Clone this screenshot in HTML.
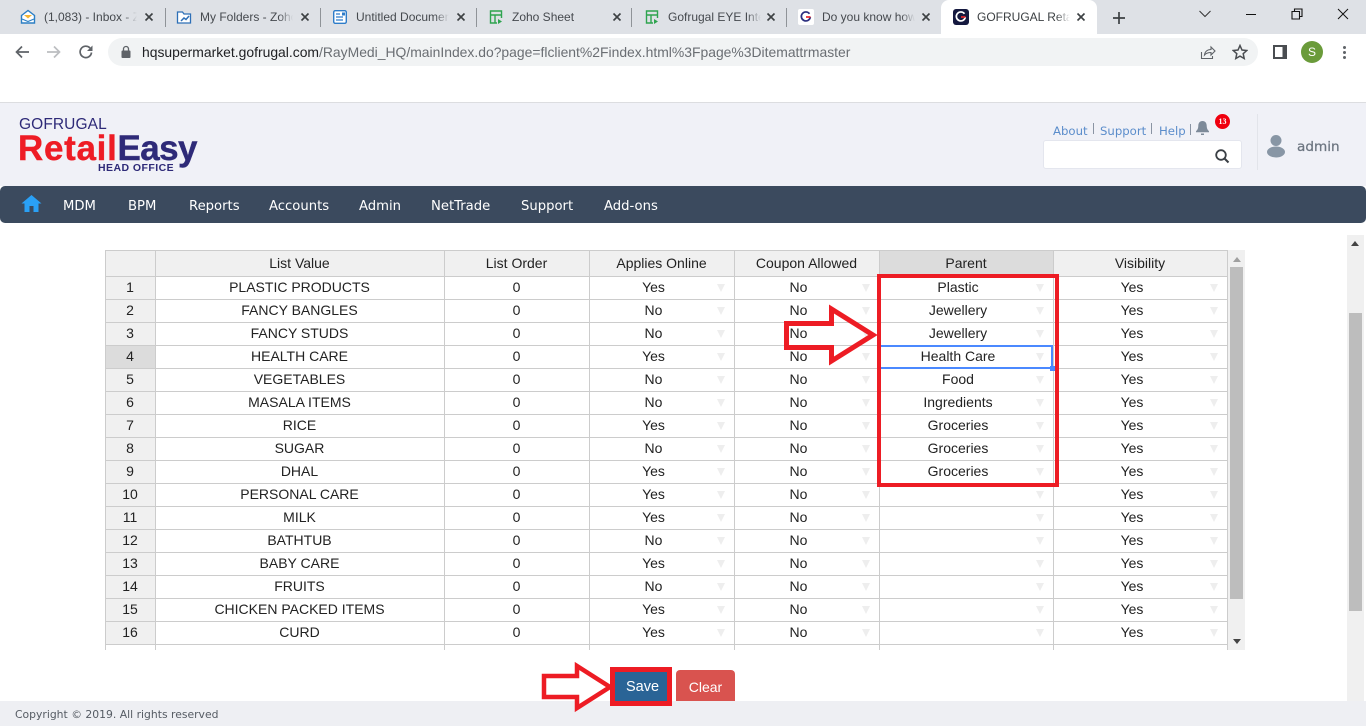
<!DOCTYPE html>
<html><head><meta charset="utf-8"><title>GOFRUGAL RetailEasy</title>
<style>
*{box-sizing:border-box}
html,body{margin:0;padding:0;width:1366px;height:726px;overflow:hidden;background:#fff;font-family:"Liberation Sans",sans-serif}
.a{position:absolute}
.tab{position:absolute;top:8px;font-size:12px;line-height:18px;color:#45494e;white-space:nowrap;overflow:hidden;height:18px}
.tab i{position:absolute;right:0;top:0;width:14px;height:18px;background:linear-gradient(90deg,rgba(222,225,230,0),#dee1e6)}
.x{position:absolute;top:11px;width:12px;height:12px}
.sep{position:absolute;top:8px;width:1px;height:19px;background:#8f9398}
.nav{position:absolute;top:198px;font:13.2px/17px "DejaVu Sans",sans-serif;color:#fff;white-space:nowrap}
.lnk{position:absolute;top:123px;font:11.7px/16px "DejaVu Sans",sans-serif;color:#5b8dcb;white-space:nowrap}
.vs{position:absolute;width:1px;background:#8a94a3}
table{border-collapse:separate;border-spacing:0;table-layout:fixed;width:1123px;font-size:14px;color:#222}
th{font-weight:normal;background:#f0f0f0;height:27px;border-top:1px solid #ccc;border-right:1px solid #ccc;border-bottom:1px solid #ccc;padding:0 1px 0 0;text-align:center;line-height:25px}
td{height:23px;border-right:1px solid #ccc;border-bottom:1px solid #ccc;padding:0 1px 2px 0;text-align:center;line-height:20px;position:relative;background:#fff;white-space:nowrap}
th:first-child,td:first-child{border-left:1px solid #ccc;background:#f0f0f0}
td.d{padding-right:17px}
td.d:after{content:"";position:absolute;right:9px;top:7px;border-left:4px solid transparent;border-right:4px solid transparent;border-top:8px solid #eee}
</style></head><body>

<!-- tab strip -->
<div class="a" style="left:0;top:0;width:1366px;height:34px;background:#dee1e6"></div>
<div class="a" style="left:941px;top:0;width:156px;height:34px;background:#fff;border-radius:8px 8px 0 0"></div>

<svg class="a" style="left:20px;top:9px" width="16" height="16" viewBox="0 0 16 16"><path d="M1.500 6.500L8 1.500l6.500 5V14h-13z" fill="#fff" stroke="#2c7fc4" stroke-width="1.400"/><path d="M4 6h8L8 9.500z" fill="#f5b532"/><path d="M2 10l6 2.500 6-2.500" fill="none" stroke="#2c7fc4" stroke-width="1.200"/></svg>
<div class="tab" style="left:44px;width:93px">(1,083) - Inbox - Zoho<i></i></div>
<svg class="x" style="left:143px" viewBox="0 0 12 12"><path d="M2.500 2.500l7 7M9.500 2.500l-7 7" stroke="#3c4043" stroke-width="1.600"/></svg>
<div class="sep" style="left:165px"></div>

<svg class="a" style="left:176px;top:9px" width="16" height="16" viewBox="0 0 16 16"><path d="M1.500 3h5l1.500 2h6.500v9h-13z" fill="#fff" stroke="#2d6fb7" stroke-width="1.300"/><path d="M5 12l3-3 2 1.500 3-3.500" fill="none" stroke="#2d6fb7" stroke-width="1.500"/></svg>
<div class="tab" style="left:200px;width:93px">My Folders - Zoho<i></i></div>
<svg class="x" style="left:299px" viewBox="0 0 12 12"><path d="M2.500 2.500l7 7M9.500 2.500l-7 7" stroke="#3c4043" stroke-width="1.600"/></svg>
<div class="sep" style="left:320px"></div>

<svg class="a" style="left:332px;top:9px" width="16" height="16" viewBox="0 0 16 16"><rect x="1.700" y="1.700" width="12.600" height="12.600" rx="1.500" fill="#fff" stroke="#2d7cc9" stroke-width="1.400"/><path d="M4 5h4M4 8h7M4 11h7" stroke="#2d7cc9" stroke-width="1.300"/><rect x="10" y="3.500" width="3" height="3" fill="#2d7cc9"/></svg>
<div class="tab" style="left:356px;width:93px">Untitled Document<i></i></div>
<svg class="x" style="left:455px" viewBox="0 0 12 12"><path d="M2.500 2.500l7 7M9.500 2.500l-7 7" stroke="#3c4043" stroke-width="1.600"/></svg>
<div class="sep" style="left:476px"></div>

<svg class="a" style="left:488px;top:9px" width="16" height="16" viewBox="0 0 16 16"><path d="M9 14H2.500V2h11v7M2.500 6h11M7 6v8" fill="none" stroke="#2ea44f" stroke-width="1.400"/><path d="M10 10l4 2.500-4 2.500z" fill="#2ea44f"/></svg>
<div class="tab" style="left:512px;width:93px">Zoho Sheet</div>
<svg class="x" style="left:611px" viewBox="0 0 12 12"><path d="M2.500 2.500l7 7M9.500 2.500l-7 7" stroke="#3c4043" stroke-width="1.600"/></svg>
<div class="sep" style="left:631px"></div>

<svg class="a" style="left:644px;top:9px" width="16" height="16" viewBox="0 0 16 16"><path d="M9 14H2.500V2h11v7M2.500 6h11M7 6v8" fill="none" stroke="#2ea44f" stroke-width="1.400"/><path d="M10 10l4 2.500-4 2.500z" fill="#2ea44f"/></svg>
<div class="tab" style="left:668px;width:93px">Gofrugal EYE Integration<i></i></div>
<svg class="x" style="left:765px" viewBox="0 0 12 12"><path d="M2.500 2.500l7 7M9.500 2.500l-7 7" stroke="#3c4043" stroke-width="1.600"/></svg>
<div class="sep" style="left:786px"></div>

<svg class="a" style="left:798px;top:9px" width="16" height="16" viewBox="0 0 16 16"><rect width="16" height="16" rx="2" fill="#fff"/><path d="M11.500 4.800A4.500 4.500 0 1 0 12.300 8" fill="none" stroke="#2b2f7f" stroke-width="1.700"/><path d="M8 8h4.500" stroke="#e8262c" stroke-width="1.700"/></svg>
<div class="tab" style="left:822px;width:93px">Do you know how to<i></i></div>
<svg class="x" style="left:920px" viewBox="0 0 12 12"><path d="M2.500 2.500l7 7M9.500 2.500l-7 7" stroke="#3c4043" stroke-width="1.600"/></svg>

<svg class="a" style="left:953px;top:9px" width="16" height="16" viewBox="0 0 16 16"><rect width="16" height="16" rx="3" fill="#15193f"/><path d="M11.500 4.800A4.500 4.500 0 1 0 12.300 8" fill="none" stroke="#fff" stroke-width="1.700"/><path d="M8 8h4.500" stroke="#e8262c" stroke-width="1.700"/></svg>
<div class="tab" style="left:977px;width:93px;color:#3c4043">GOFRUGAL RetailEasy<i style="background:linear-gradient(90deg,rgba(255,255,255,0),#fff)"></i></div>
<svg class="x" style="left:1075px" viewBox="0 0 12 12"><path d="M2.500 2.500l7 7M9.500 2.500l-7 7" stroke="#3c4043" stroke-width="1.600"/></svg>

<svg class="a" style="left:1112px;top:11px" width="14" height="14" viewBox="0 0 14 14"><path d="M7 1v12M1 7h12" stroke="#3c4043" stroke-width="1.700"/></svg>

<!-- window controls -->
<svg class="a" style="left:1198px;top:8px" width="14" height="12" viewBox="0 0 14 12"><path d="M1.500 3L7 8.500 12.500 3" fill="none" stroke="#333" stroke-width="1"/></svg>
<div class="a" style="left:1246px;top:14px;width:10px;height:1px;background:#111"></div>
<svg class="a" style="left:1291px;top:8px" width="12" height="12" viewBox="0 0 12 12"><path d="M3.500 3V1h7.500v7.500H8.500M1 3.500h7.500V11H1z" fill="none" stroke="#111" stroke-width="1.100"/></svg>
<svg class="a" style="left:1337px;top:8px" width="12" height="12" viewBox="0 0 12 12"><path d="M1 1l10 10M11 1L1 11" stroke="#111" stroke-width="1"/></svg>

<!-- toolbar -->
<svg class="a" style="left:14px;top:44px" width="16" height="16" viewBox="0 0 16 16"><path d="M15 8H2.500M8 2.500L2.500 8 8 13.500" fill="none" stroke="#5f6368" stroke-width="1.700"/></svg>
<svg class="a" style="left:46px;top:44px" width="16" height="16" viewBox="0 0 16 16"><path d="M1 8h12.500M8 2.500L13.500 8 8 13.500" fill="none" stroke="#bcbec1" stroke-width="1.700"/></svg>
<svg class="a" style="left:78px;top:44px" width="16" height="16" viewBox="0 0 16 16"><path d="M13.500 8.500A5.700 5.700 0 1 1 12 4" fill="none" stroke="#5f6368" stroke-width="1.700"/><path d="M14.500 1.500v5.500h-5.500z" fill="#5f6368"/></svg>
<div class="a" style="left:108px;top:38px;width:1150px;height:28px;background:#f1f3f4;border-radius:14px"></div>
<svg class="a" style="left:120px;top:45px" width="12" height="14" viewBox="0 0 12 14"><rect x="1.500" y="5.500" width="9" height="7.500" rx="1" fill="#5f6368"/><path d="M3.500 5.500V4a2.500 2.500 0 0 1 5 0v1.500" fill="none" stroke="#5f6368" stroke-width="1.300"/></svg>
<div class="a" style="left:142px;top:44px;font-size:13.920px;line-height:17px;color:#6a6e73;white-space:nowrap"><span style="color:#202124">hqsupermarket.gofrugal.com</span>/RayMedi_HQ/mainIndex.do?page=flclient%2Findex.html%3Fpage%3Ditemattrmaster</div>
<svg class="a" style="left:1200px;top:44px" width="16" height="16" viewBox="0 0 16 16"><path d="M1.500 8v6.500h11V12" fill="none" stroke="#5f6368" stroke-width="1.100"/><path d="M4.500 11c.5-3.500 3-5.500 6.500-5.500V3l4 4-4 4V8.500c-2.800 0-5 .8-6.500 2.500z" fill="none" stroke="#5f6368" stroke-width="1.100"/></svg>
<svg class="a" style="left:1232px;top:44px" width="16" height="16" viewBox="0 0 16 16"><path d="M8 1.500l2 4.500 4.800.5-3.600 3.200 1 4.800L8 12.100l-4.200 2.400 1-4.800L1.200 6.500 6 6z" fill="none" stroke="#4a4d51" stroke-width="1.500"/></svg>
<svg class="a" style="left:1273px;top:45px" width="14" height="14" viewBox="0 0 14 14"><rect width="14" height="14" fill="#4a4d51"/><rect x="2" y="2" width="7.500" height="10" fill="#fff"/></svg>
<div class="a" style="left:1301px;top:41px;width:22px;height:22px;border-radius:50%;background:#6a9b3a;color:#fff;font-size:12px;line-height:22px;text-align:center">S</div>
<div class="a" style="left:1343px;top:46px;width:3px;height:3px;border-radius:50%;background:#5f6368"></div>
<div class="a" style="left:1343px;top:51px;width:3px;height:3px;border-radius:50%;background:#5f6368"></div>
<div class="a" style="left:1343px;top:56px;width:3px;height:3px;border-radius:50%;background:#5f6368"></div>

<!-- app header -->
<div class="a" style="left:0;top:102px;width:1366px;height:1px;background:#dcdde0"></div>
<div class="a" style="left:0;top:103px;width:1366px;height:83px;background:#f0f1f7"></div>

<div class="a" style="left:19px;top:116px;font-size:15.500px;line-height:17px;color:#2e2a78;letter-spacing:.1px;white-space:nowrap">GOFRUGAL</div>
<div class="a" style="left:18px;top:130px;font-size:35px;line-height:38px;font-weight:bold;color:#ee1c25;letter-spacing:.7px;white-space:nowrap;-webkit-text-stroke:.4px #ee1c25">Retail<span style="color:#2e2a78;letter-spacing:-.6px;-webkit-text-stroke:.4px #2e2a78">Easy</span></div>
<div class="a" style="left:98px;top:162px;font-size:10.500px;line-height:12px;font-weight:bold;color:#2e2a78;letter-spacing:.45px;white-space:nowrap">HEAD OFFICE</div>

<div class="lnk" style="left:1053px">About</div>
<div class="vs" style="left:1093px;top:123px;height:11px"></div>
<div class="lnk" style="left:1100px">Support</div>
<div class="vs" style="left:1151px;top:123px;height:11px"></div>
<div class="lnk" style="left:1159px">Help</div>
<div class="vs" style="left:1190px;top:124px;height:11px"></div>
<svg class="a" style="left:1195px;top:120px" width="15" height="16" viewBox="0 0 15 16"><path d="M7.500 1c-2.800 0-4.200 2.200-4.200 4.800 0 2.800-1 4.200-2.300 5.400v1h13v-1c-1.300-1.200-2.300-2.600-2.300-5.400C11.700 3.200 10.300 1 7.500 1z" fill="#7d8a99"/><path d="M6 13.500h3V15H6z" fill="#7d8a99"/></svg>
<div class="a" style="left:1215px;top:114px;width:15px;height:15px;border-radius:50%;background:#f0000f;color:#fff;font:bold 8px/15px 'Liberation Serif',serif;text-align:center">13</div>
<div class="a" style="left:1043px;top:140px;width:199px;height:29px;background:#fff;border:1px solid #e4e6ee;border-radius:3px"></div>
<svg class="a" style="left:1214px;top:148px" width="16" height="16" viewBox="0 0 16 16"><circle cx="7" cy="7" r="4.800" fill="none" stroke="#3a3f45" stroke-width="1.800"/><path d="M10.500 10.500l4 4" stroke="#3a3f45" stroke-width="2"/></svg>
<div class="a" style="left:1257px;top:114px;width:1px;height:56px;background:#e2e4ea"></div>
<svg class="a" style="left:1266px;top:134px" width="20" height="24" viewBox="0 0 20 24"><circle cx="10" cy="6.500" r="5.500" fill="#8896a5"/><ellipse cx="10" cy="18" rx="9" ry="5.500" fill="#8896a5"/></svg>
<div class="a" style="left:1297px;top:138px;font:13.600px/18px 'DejaVu Sans',sans-serif;color:#6c7580;white-space:nowrap;-webkit-text-stroke:.25px #6c7580">admin</div>

<!-- nav -->
<div class="a" style="left:0;top:186px;width:1366px;height:37px;background:#3b4a5e;border-radius:5px"></div>
<svg class="a" style="left:21px;top:194px" width="21" height="18" viewBox="0 0 21 18"><path d="M10.500 1L0.500 9.500h3V18h5v-6h4v6h5V9.500h3z" fill="#2aa0f5"/></svg>
<div class="nav" style="left:63px">MDM</div>
<div class="nav" style="left:128px">BPM</div>
<div class="nav" style="left:189px">Reports</div>
<div class="nav" style="left:269px">Accounts</div>
<div class="nav" style="left:359px">Admin</div>
<div class="nav" style="left:431px">NetTrade</div>
<div class="nav" style="left:521px">Support</div>
<div class="nav" style="left:604px">Add-ons</div>

<!-- grid -->
<div class="a" style="left:105px;top:250px;width:1123px;height:400px;overflow:hidden">
<table>
<colgroup><col style="width:51px"><col style="width:289px"><col style="width:145px"><col style="width:145px"><col style="width:145px"><col style="width:174px"><col style="width:174px"></colgroup>
<tr><th></th><th>List Value</th><th>List Order</th><th>Applies Online</th><th>Coupon Allowed</th><th style="background:#dcdcdc">Parent</th><th>Visibility</th></tr>
<tr><td>1</td><td>PLASTIC PRODUCTS</td><td>0</td><td class="d">Yes</td><td class="d">No</td><td class="d">Plastic</td><td class="d">Yes</td></tr>
<tr><td>2</td><td>FANCY BANGLES</td><td>0</td><td class="d">No</td><td class="d">No</td><td class="d">Jewellery</td><td class="d">Yes</td></tr>
<tr><td>3</td><td>FANCY STUDS</td><td>0</td><td class="d">No</td><td class="d">No</td><td class="d">Jewellery</td><td class="d">Yes</td></tr>
<tr><td style="background:#dcdcdc">4</td><td>HEALTH CARE</td><td>0</td><td class="d">Yes</td><td class="d">No</td><td class="d">Health Care</td><td class="d">Yes</td></tr>
<tr><td>5</td><td>VEGETABLES</td><td>0</td><td class="d">No</td><td class="d">No</td><td class="d">Food</td><td class="d">Yes</td></tr>
<tr><td>6</td><td>MASALA ITEMS</td><td>0</td><td class="d">No</td><td class="d">No</td><td class="d">Ingredients</td><td class="d">Yes</td></tr>
<tr><td>7</td><td>RICE</td><td>0</td><td class="d">Yes</td><td class="d">No</td><td class="d">Groceries</td><td class="d">Yes</td></tr>
<tr><td>8</td><td>SUGAR</td><td>0</td><td class="d">No</td><td class="d">No</td><td class="d">Groceries</td><td class="d">Yes</td></tr>
<tr><td>9</td><td>DHAL</td><td>0</td><td class="d">Yes</td><td class="d">No</td><td class="d">Groceries</td><td class="d">Yes</td></tr>
<tr><td>10</td><td>PERSONAL CARE</td><td>0</td><td class="d">Yes</td><td class="d">No</td><td class="d"></td><td class="d">Yes</td></tr>
<tr><td>11</td><td>MILK</td><td>0</td><td class="d">Yes</td><td class="d">No</td><td class="d"></td><td class="d">Yes</td></tr>
<tr><td>12</td><td>BATHTUB</td><td>0</td><td class="d">No</td><td class="d">No</td><td class="d"></td><td class="d">Yes</td></tr>
<tr><td>13</td><td>BABY CARE</td><td>0</td><td class="d">Yes</td><td class="d">No</td><td class="d"></td><td class="d">Yes</td></tr>
<tr><td>14</td><td>FRUITS</td><td>0</td><td class="d">No</td><td class="d">No</td><td class="d"></td><td class="d">Yes</td></tr>
<tr><td>15</td><td>CHICKEN PACKED ITEMS</td><td>0</td><td class="d">Yes</td><td class="d">No</td><td class="d"></td><td class="d">Yes</td></tr>
<tr><td>16</td><td>CURD</td><td>0</td><td class="d">Yes</td><td class="d">No</td><td class="d"></td><td class="d">Yes</td></tr>
<tr><td style="background:#fff"></td><td></td><td></td><td></td><td></td><td></td><td></td></tr>
</table>
</div>

<!-- selected cell -->
<div class="a" style="left:879px;top:345px;width:174px;height:24px;border:2px solid #4b89ff"></div>
<div class="a" style="left:1050px;top:366px;width:5px;height:5px;background:#4b89ff"></div>

<!-- grid scrollbar -->
<div class="a" style="left:1228px;top:250px;width:17px;height:400px;background:#f0f0f0"></div>
<div class="a" style="left:1230px;top:267px;width:13px;height:332px;background:#bdbdbd"></div>
<div class="a" style="left:1233px;top:257px;border-left:4px solid transparent;border-right:4px solid transparent;border-bottom:5px solid #a0a0a0"></div>
<div class="a" style="left:1233px;top:639px;border-left:4px solid transparent;border-right:4px solid transparent;border-top:5px solid #444"></div>

<!-- page scrollbar -->
<div class="a" style="left:1347px;top:235px;width:17px;height:466px;background:#f0f0f0"></div>
<div class="a" style="left:1349px;top:313px;width:13px;height:298px;background:#bdbdbd"></div>
<div class="a" style="left:1351px;top:241px;border-left:4px solid transparent;border-right:4px solid transparent;border-bottom:5px solid #444"></div>

<!-- red annotations -->
<div class="a" style="left:877px;top:274px;width:182px;height:213px;border:4px solid #ed1c24"></div>
<svg class="a" style="left:780px;top:300px" width="100" height="70" viewBox="780 300 100 70"><path d="M786.500 323.500H831.500V309L873 335 831.500 361V347.500H786.500z" fill="none" stroke="#ed1c24" stroke-width="5"/></svg>

<!-- footer -->
<div class="a" style="left:0;top:701px;width:1366px;height:25px;background:#eeeff3"></div>
<div class="a" style="left:15px;top:707px;font:10.800px/16px 'DejaVu Sans',sans-serif;color:#555b63;white-space:nowrap">Copyright © 2019. All rights reserved</div>

<!-- buttons -->
<div class="a" style="left:676px;top:670px;width:59px;height:31px;background:#d9534f;border-radius:4px 4px 0 0;color:#fff;font-size:14px;line-height:34px;text-align:center">Clear</div>
<div class="a" style="left:610px;top:667px;width:62px;height:39px;background:#2a6496;border:5px solid #ed1c24;color:#fff;font-size:14.500px;line-height:31px;text-align:center;padding-left:3px">Save</div>
<svg class="a" style="left:538px;top:660px" width="78" height="54" viewBox="538 660 78 54"><path d="M544 676H577V666L610 687 577 708V697H544z" fill="#fff" stroke="#ed1c24" stroke-width="4.500"/></svg>
</body></html>
